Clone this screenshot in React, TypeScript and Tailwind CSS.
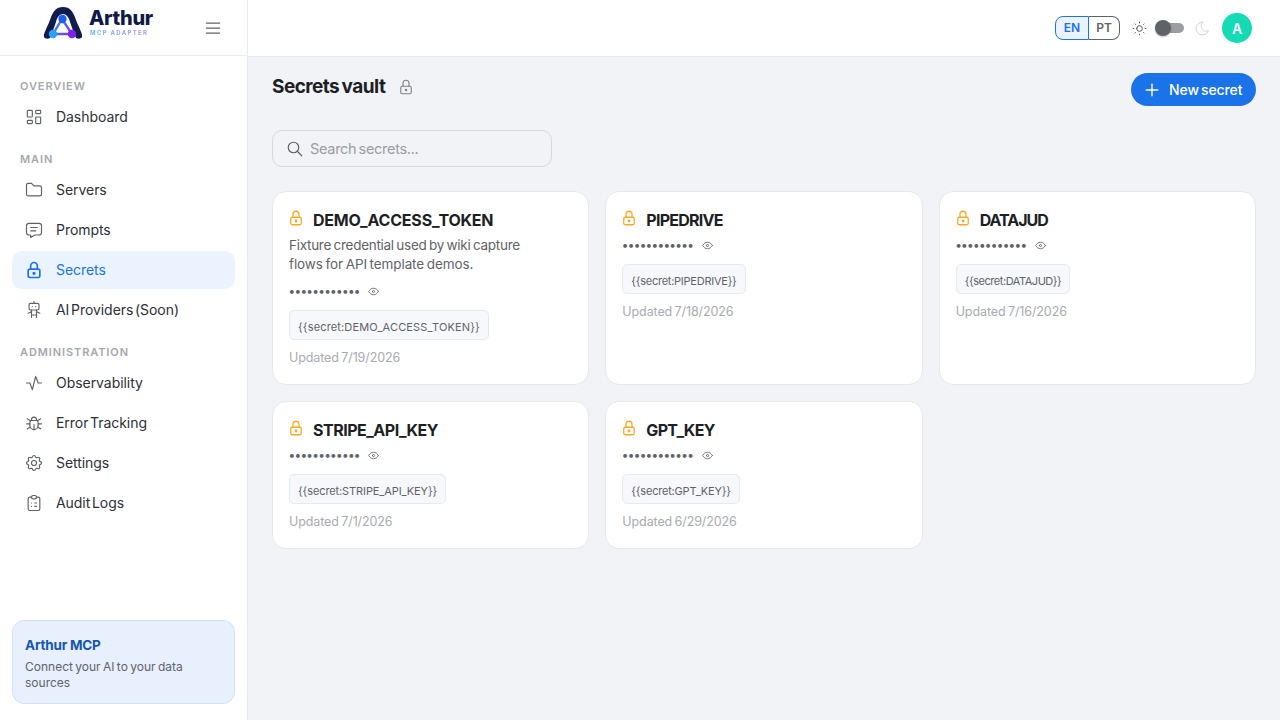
import React from "react";
import { TbLayoutDashboard, TbFolder, TbMessage, TbLock, TbRobot, TbActivity, TbBug, TbSettings, TbClipboardList, TbMenu2, TbSun, TbMoon, TbPlus, TbSearch, TbEye } from "react-icons/tb";

type NavItem = { label: string; icon: React.ComponentType<any>; active?: boolean };

function NavRow({ label, icon: Icon, active }: NavItem) {
  return (
    <div className={active ? "flex h-[38px] items-center gap-[12px] rounded-[10px] bg-[#ebf3fe] px-3 text-[#1a73e8]" : "flex h-[38px] items-center gap-[12px] rounded-[10px] px-3 text-[#2d3038]"}>
      <Icon size={20} strokeWidth={active ? 2 : 1.4} className={active ? "text-[#1a73e8]" : "text-[#5f6368]"} />
      <span className="mt-[-1px] text-[14px] font-[420] tracking-[-0.05px] [word-spacing:-2.2px]">{label}</span>
    </div>
  );
}

function SectionLabel({ children }: { children: React.ReactNode }) {
  return <div className="h-[22px] px-2 text-[11px] font-semibold leading-[21px] tracking-[0.9px] text-[#a5a8ad]">{children}</div>;
}

function Logo() {
  return (
    <div className="mb-[10px] flex items-center gap-[6px]">
      <svg width="40" height="34" viewBox="0 0 40 34">
        <defs>
          <linearGradient id="tri" x1="0" y1="0" x2="1" y2="1">
            <stop offset="0" stopColor="#2196f3" />
            <stop offset="1" stopColor="#7c3aed" />
          </linearGradient>
        </defs>
        <path d="M1 31 C0 28 4 22 7 14 C10 5 13 1 20 1 C27 1 30 5 33 14 C36 22 40 28 39 31 C38 33 35 33 33 32 C31 27 29 22 27 16 C26 11 23 8 20 8 C17 8 14 11 13 16 C11 22 9 27 7 32 C5 33 2 33 1 31 Z" fill="#0f1c4d" />
        <path d="M19 13 L10 28 L29 28 Z" fill="#fff" stroke="url(#tri)" strokeWidth="2.4" />
        <circle cx="19.5" cy="13" r="4.2" fill="#1a62ee" />
        <circle cx="10" cy="28" r="4.2" fill="#29a3f5" />
        <circle cx="29" cy="28" r="4.2" fill="#7c22ee" />
      </svg>
      <div className="flex flex-col">
        <span className="text-[20px] font-extrabold leading-[19px] tracking-[-0.3px] text-[#111a45]">Arthur</span>
        <span className="mt-[1px] bg-gradient-to-r from-[#5bb4f7] to-[#a78bfa] bg-clip-text pl-[1px] text-[6px] font-bold leading-[7px] tracking-[1.3px] text-transparent">MCP ADAPTER</span>
      </div>
    </div>
  );
}

function SecretCard({ name, desc, ref_, date, titleCls, chipCls }: { name: string; desc?: React.ReactNode; ref_: string; date: string; titleCls: string; chipCls: string }) {
  return (
    <div className="flex flex-col rounded-[14px] border border-[#e6e8ec] bg-white px-4 pt-4 pb-[17px]">
      <div className="flex h-[24px] items-center">
        <TbLock size={18} strokeWidth={1.7} className="mt-[-4px] ml-[-2px] text-[#f9a825]" />
        <span className={titleCls}>{name}</span>
      </div>
      {desc}
      <div className={desc ? "mt-[7px] flex h-[20px] items-center gap-[7px]" : "mt-[3px] flex h-[20px] items-center gap-[7px]"}>
        <span className="text-[12px] font-bold leading-[20px] tracking-[0.25px] text-[#5f6368]">••••••••••••</span>
        <TbEye size={13} strokeWidth={1.6} className="text-[#5f6368]" />
      </div>
      <div className={chipCls}>{ref_}</div>
      <div className="mt-[9px] text-[12.5px] leading-[18px] tracking-[-0.1px] text-[#a8abb0] [word-spacing:-1px]">{date}</div>
    </div>
  );
}

export default function App() {
  return (
    <div className="flex h-[720px] w-[1280px] overflow-hidden bg-[#f1f3f6] font-['Inter',sans-serif]">
      <aside className="flex w-[248px] shrink-0 flex-col border-r border-[#e8eaed] bg-white">
        <div className="flex h-[56px] shrink-0 items-center border-b border-[#e8eaed] pr-[24px] pl-[43px]">
          <Logo />
          <TbMenu2 size={20} strokeWidth={1.5} className="ml-auto text-[#5f6368]" />
        </div>
        <nav className="flex flex-col px-3 pt-[20px]">
          <SectionLabel>OVERVIEW</SectionLabel>
          <NavRow label="Dashboard" icon={TbLayoutDashboard} />
          <div className="mt-[13px]"><SectionLabel>MAIN</SectionLabel></div>
          <div className="flex flex-col gap-[2px]">
            <NavRow label="Servers" icon={TbFolder} />
            <NavRow label="Prompts" icon={TbMessage} />
            <NavRow label="Secrets" icon={TbLock} active />
            <NavRow label="AI Providers (Soon)" icon={TbRobot} />
          </div>
          <div className="mt-[13px]"><SectionLabel>ADMINISTRATION</SectionLabel></div>
          <div className="flex flex-col gap-[2px]">
            <NavRow label="Observability" icon={TbActivity} />
            <NavRow label="Error Tracking" icon={TbBug} />
            <NavRow label="Settings" icon={TbSettings} />
            <NavRow label="Audit Logs" icon={TbClipboardList} />
          </div>
        </nav>
        <div className="mx-3 mt-auto mb-4 h-[84px] rounded-[12px] border border-[#d2e0fb] bg-[#e8f0fd] px-3 pt-[15px]">
          <div className="text-[13.5px] font-bold leading-[18px] tracking-[-0.2px] text-[#1557b0]">Arthur MCP</div>
          <div className="mt-[5px] text-[12px] leading-[16px] text-[#5f6368] [word-spacing:-1px]">Connect your AI to your data sources</div>
        </div>
      </aside>
      <div className="flex min-w-0 flex-1 flex-col">
        <header className="flex h-[57px] shrink-0 items-center border-b border-[#e8eaed] bg-white pr-[28px]">
          <div className="ml-auto flex items-center">
            <div className="flex h-[24px] text-[12px] font-semibold">
              <span className="flex w-[34px] items-center justify-center rounded-l-[8px] border border-[#1a73e8] bg-[#ebf3fe] text-[#1a73e8]">EN</span>
              <span className="flex w-[31px] items-center justify-center rounded-r-[8px] border border-l-0 border-[#5f6368] text-[#5f6368]">PT</span>
            </div>
            <TbSun size={17} strokeWidth={1.4} className="ml-[11px] text-[#4f5359]" />
            <div className="relative ml-[8px] h-[10px] w-[28px] rounded-full bg-[#9b9da0]">
              <div className="absolute top-[-3px] left-[-1px] h-[16px] w-[16px] rounded-full bg-[#5f6368] shadow-[0_1px_2px_rgba(0,0,0,0.25)]" />
            </div>
            <TbMoon size={17} strokeWidth={1.4} className="ml-[10px] text-[#d0d2d5]" />
            <div className="ml-[11px] flex h-[30px] w-[30px] items-center justify-center rounded-full bg-[#14dbb4] text-[14px] font-semibold text-white">A</div>
          </div>
        </header>
        <main className="flex-1 px-6 pt-4">
          <div className="flex items-start justify-between">
            <div className="mt-[1px] flex h-[26px] items-center">
              <h1 className="text-[19px] font-bold tracking-[-0.55px] text-[#1d1f24] [word-spacing:-1.5px]">Secrets vault</h1>
              <TbLock size={18} strokeWidth={1.5} className="ml-[12px] text-[#7f8286]" />
            </div>
            <button className="flex h-[33px] w-[125px] items-center rounded-full bg-[#1a73e8] pl-[11px] text-[14px] font-[450] tracking-[-0.1px] whitespace-nowrap text-white [word-spacing:-1.5px]">
              <TbPlus size={20} strokeWidth={1.7} />
              <span className="ml-[7px]">New secret</span>
            </button>
          </div>
          <div className="mt-[24px] flex h-[37px] w-[280px] items-center rounded-[10px] border border-[#d5d8dc] bg-[#f1f3f6] pl-[13px]">
            <TbSearch size={18} strokeWidth={1.6} className="text-[#5f6368]" />
            <span className="ml-[6px] text-[14.5px] tracking-[-0.3px] text-[#9b9da0] [word-spacing:-1.5px]">Search secrets...</span>
          </div>
          <div className="mt-[24px] grid grid-cols-3 gap-4">
            <SecretCard
              name="DEMO_ACCESS_TOKEN"
              titleCls="ml-[8px] text-[16px] font-bold tracking-[-0.2px] text-[#1d1f24]"
              chipCls="mt-[9px] flex h-[30px] w-fit items-center rounded-[5px] border border-[#e5e9f0] bg-[#f6f8fc] px-2 pt-[4px] text-[11px] tracking-[0.15px] text-[#5f6368]"
              desc={
                <div className="mt-[4px] text-[13.5px] leading-[19px] text-[#5f6368] [word-spacing:-1px]">
                  <div className="tracking-[-0.28px]">Fixture credential used by wiki capture</div>
                  <div className="tracking-[-0.1px]">flows for API template demos.</div>
                </div>
              }
              ref_="{{secret:DEMO_ACCESS_TOKEN}}"
              date="Updated 7/19/2026"
            />
            <SecretCard
              name="PIPEDRIVE"
              titleCls="ml-[8px] text-[16px] font-bold tracking-[-0.75px] text-[#1d1f24]"
              chipCls="mt-[9px] flex h-[30px] w-fit items-center rounded-[5px] border border-[#e5e9f0] bg-[#f6f8fc] px-2 pt-[4px] text-[11px] tracking-[-0.25px] text-[#5f6368]"
              ref_="{{secret:PIPEDRIVE}}"
              date="Updated 7/18/2026"
            />
            <SecretCard
              name="DATAJUD"
              titleCls="ml-[8px] text-[16px] font-bold tracking-[-1px] text-[#1d1f24]"
              chipCls="mt-[9px] flex h-[30px] w-fit items-center rounded-[5px] border border-[#e5e9f0] bg-[#f6f8fc] px-2 pt-[4px] text-[11px] tracking-[-0.45px] text-[#5f6368]"
              ref_="{{secret:DATAJUD}}"
              date="Updated 7/16/2026"
            />
            <SecretCard
              name="STRIPE_API_KEY"
              titleCls="ml-[8px] text-[16px] font-bold tracking-[-0.5px] text-[#1d1f24]"
              chipCls="mt-[9px] flex h-[30px] w-fit items-center rounded-[5px] border border-[#e5e9f0] bg-[#f6f8fc] px-2 pt-[4px] text-[11px] tracking-[-0.1px] text-[#5f6368]"
              ref_="{{secret:STRIPE_API_KEY}}"
              date="Updated 7/1/2026"
            />
            <SecretCard
              name="GPT_KEY"
              titleCls="ml-[8px] text-[16px] font-bold tracking-[-0.7px] text-[#1d1f24]"
              chipCls="mt-[9px] flex h-[30px] w-fit items-center rounded-[5px] border border-[#e5e9f0] bg-[#f6f8fc] px-2 pt-[4px] text-[11px] tracking-[-0.2px] text-[#5f6368]"
              ref_="{{secret:GPT_KEY}}"
              date="Updated 6/29/2026"
            />
          </div>
        </main>
      </div>
    </div>
  );
}
